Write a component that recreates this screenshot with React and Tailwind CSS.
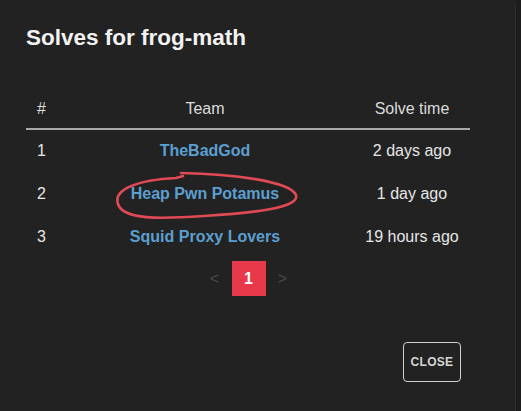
const solves = [
  { rank: 1, team: "TheBadGod", time: "2 days ago" },
  { rank: 2, team: "Heap Pwn Potamus", time: "1 day ago" },
  { rank: 3, team: "Squid Proxy Lovers", time: "19 hours ago" },
];

function Scribble() {
  return (
    <svg
      className="absolute left-0 top-0 pointer-events-none"
      width="521"
      height="411"
      viewBox="0 0 521 411"
      fill="none"
    >
      <path
        d="M181 173 C 232 174, 290 181, 296 195 C 300 208, 252 213, 204 216 C 160 219, 123 220, 118 204 C 113 189, 138 180, 176 178 L 183 176"
        stroke="#e04a55"
        strokeWidth="2.6"
        strokeLinecap="round"
      />
    </svg>
  );
}

export default function App() {
  return (
    <div
      className="relative w-[521px] h-[411px] overflow-hidden bg-[#1d1d1d] flex"
      style={{ fontFamily: '"Liberation Sans", Arial, sans-serif' }}
    >
      <div className="w-[516px] h-full bg-[#222222] border-r border-[#2e2e2e] rounded-tr-md flex flex-col">
        <h2 className="pl-[26px] pt-[25px] text-[22.5px] font-bold text-[#f2f2f2] leading-[26px]">
          Solves for frog-math
        </h2>

        <table className="ml-[26px] mt-[38px] w-[444px] table-fixed border-collapse text-[16px]">
          <thead>
            <tr className="border-b-2 border-[#a9a9a9] text-[#dcdcdc]">
              <th className="w-[30px] h-[40px] pl-[11px] text-left font-normal">#</th>
              <th className="w-[298px] font-normal text-center">Team</th>
              <th className="w-[116px] font-normal text-center">Solve time</th>
            </tr>
          </thead>
          <tbody>
            {solves.map((s) => (
              <tr key={s.rank} className="h-[43px] text-[#e6e6e6]">
                <td className="pl-[11px]">{s.rank}</td>
                <td className="text-center font-bold text-[#5b9fd0]">{s.team}</td>
                <td className="text-center">{s.time}</td>
              </tr>
            ))}
          </tbody>
        </table>

        <div className="mt-[3px] flex items-center justify-center gap-[10px] pr-[18px]">
          <span className="text-[16px] text-[#4a4a4a] w-[14px] text-center">&lt;</span>
          <span className="w-[34px] h-[35px] bg-[#e8394a] text-white font-bold text-[16px] flex items-center justify-center">
            1
          </span>
          <span className="text-[16px] text-[#4a4a4a] w-[14px] text-center">&gt;</span>
        </div>

        <div className="mt-[46px] flex justify-end pr-[54px]">
          <button className="w-[58px] h-[40px] border border-[#d0d0d0] rounded-[4px] text-[12px] font-bold text-[#d6d6d6] tracking-[0.3px]">
            CLOSE
          </button>
        </div>
      </div>
      <Scribble />
    </div>
  );
}
